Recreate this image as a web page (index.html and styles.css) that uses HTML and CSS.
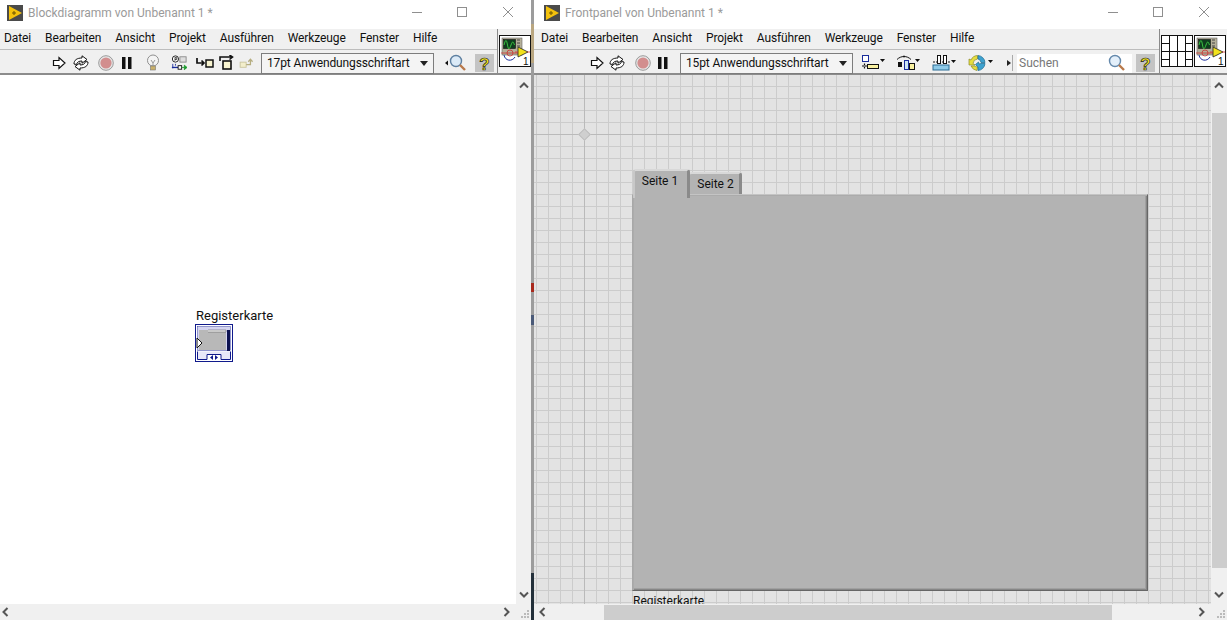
FILE: index.html
```
<!DOCTYPE html>
<html lang="de">
<head>
<meta charset="utf-8">
<title>LabVIEW</title>
<link rel="stylesheet" href="styles.css">
</head>
<body>
<svg class="defs" width="0" height="0">
  <defs>
    <symbol id="logo" viewBox="0 0 16 16"><rect width="16" height="16" fill="#4a4a4a"/><path d="M2 1 L15 8 L2 15 Z" fill="#f4c20d"/><path d="M5 8h4M7 6v4" stroke="#6b5200" stroke-width="1"/></symbol>
    <symbol id="min" viewBox="0 0 10 10"><path d="M0 5.500H10" stroke="#8f8f8f"/></symbol>
    <symbol id="max" viewBox="0 0 10 10"><rect x=".5" y=".5" width="9" height="9" fill="none" stroke="#8f8f8f"/></symbol>
    <symbol id="close" viewBox="0 0 10 10"><path d="M0 0L10 10M10 0L0 10" stroke="#8f8f8f"/></symbol>
    <symbol id="run" viewBox="0 0 14 14"><path d="M1.500 4.500H7V1.500L13 7L7 12.500V9.500H1.500Z" fill="#fff" stroke="#111" stroke-width="1.200"/></symbol>
    <symbol id="cont" viewBox="0 0 18 16"><path d="M2 9C2 5 5 3 10 3V.8L15 4.500L10 8.200V6C7 6 5 7 4.500 9.500Z" fill="#fff" stroke="#111"/><path d="M16 7C16 11 13 13 8 13V15.200L3 11.500L8 7.800V10C11 10 13 9 13.500 6.500Z" fill="#fff" stroke="#111"/></symbol>
    <symbol id="abort" viewBox="0 0 16 16"><circle cx="8" cy="8" r="7.300" fill="#e6e6e6" stroke="#9a9a9a"/><circle cx="8" cy="8" r="5.600" fill="#d28e8e"/></symbol>
    <symbol id="pause" viewBox="0 0 10 12"><path d="M0 0H3.500V12H0ZM6 0H9.500V12H6Z" fill="#111"/></symbol>
    <symbol id="bulb" viewBox="0 0 14 18"><circle cx="7" cy="6.500" r="5.500" fill="#f4f4f4" stroke="#8f8f8f"/><path d="M5 6l2 3 2-3M7 9v3" stroke="#999" fill="none"/><rect x="4.500" y="12" width="5" height="4" fill="#c9b06a" stroke="#777" stroke-width=".6"/></symbol>
    <symbol id="retain" viewBox="0 0 18 18"><circle cx="5" cy="4.500" r="3.500" fill="#fff" stroke="#111"/><path d="M4.500 2.500V6.500M4.500 3h2v2h-2" stroke="#111" fill="none" stroke-width=".8"/><rect x="10" y="2" width="7" height="6" fill="#ddd" stroke="#888"/><path d="M1 14H10" stroke="#1a2d9c" stroke-width="1.500"/><path d="M2 10v5M5 10v2" stroke="#1a2d9c"/><rect x="8" y="12" width="4" height="4" fill="#fff" stroke="#111"/><path d="M12 14h3M15 11.500l3 2.500-3 2.500z" fill="#1b9a2c" stroke="#1b9a2c"/></symbol>
    <symbol id="into" viewBox="0 0 18 12"><path d="M1 1V6H8M5.500 3.500L8 6L5.500 8.500" stroke="#111" stroke-width="1.700" fill="none"/><rect x="10" y="3" width="7" height="7" fill="#f8f4d0" stroke="#111" stroke-width="1.500"/></symbol>
    <symbol id="over" viewBox="0 0 16 16"><path d="M1 6V2H13M10.500 0L13.500 2L10.500 4.500" stroke="#111" stroke-width="1.600" fill="none"/><rect x="4" y="6" width="8" height="8" fill="#f8f4d0" stroke="#111" stroke-width="1.600"/></symbol>
    <symbol id="out" viewBox="0 0 18 14"><rect x="1" y="6" width="7" height="6" fill="#f3eecb" stroke="#c8c29a"/><path d="M8 9H13V4M10.500 5.500L13 2.500L15.500 5.500" stroke="#b5ad80" stroke-width="1.500" fill="none"/></symbol>
    <symbol id="lens" viewBox="0 0 22 18"><path d="M0 9L3 6.500V11.500Z" fill="#111"/><circle cx="11" cy="7" r="5.500" fill="#dbeaf7" stroke="#5d7fa0" stroke-width="1.400"/><path d="M15 11L20 16" stroke="#b9794a" stroke-width="2.400"/></symbol>
    <symbol id="lens2" viewBox="0 0 18 18"><circle cx="7" cy="7" r="5.500" fill="#e3effa" stroke="#6488ab" stroke-width="1.400"/><path d="M11 11L16 16" stroke="#b9794a" stroke-width="2.400"/></symbol>
    <symbol id="help" viewBox="0 0 19 18"><rect width="19" height="18" fill="#c4c4c4"/><text x="9.500" y="15.500" font-family="Liberation Sans" font-size="17" font-weight="700" text-anchor="middle" fill="#f5e61c" stroke="#222" stroke-width=".7">?</text></symbol>
    <symbol id="vi" viewBox="0 0 32 32"><rect x=".5" y=".5" width="31" height="31" fill="#fff" stroke="#111"/><rect x="3" y="3" width="20" height="17" fill="#b5b09a" stroke="#666" stroke-width=".6"/><rect x="4.500" y="4.500" width="12" height="9" fill="#0e3d1d" stroke="#111" stroke-width=".6"/><path d="M5 10c1.500-6 2.500-6 3.500 0s2 4 3.500 0 2-4 3.500 0" stroke="#45e04a" fill="none" stroke-width=".8"/><path d="M18 5h3M18 8h3M18 11h3" stroke="#444"/><path d="M2 18H22" stroke="#c33" stroke-width=".8"/><circle cx="11" cy="18" r="3" fill="none" stroke="#c33" stroke-width=".8"/><path d="M5 20c1 6 8 7 11 2" stroke="#1a2d9c" fill="none"/><path d="M19 12L29 17L19 22Z" fill="#f2e21c" stroke="#222" stroke-width=".8"/><path d="M16 17h3M28 17h3" stroke="#c33" stroke-width=".8"/><text x="24" y="30" font-family="Liberation Sans" font-size="10" fill="#111">1</text></symbol>
    <symbol id="conn" viewBox="0 0 32 32"><rect x=".5" y=".5" width="31" height="31" fill="#fff" stroke="#111"/><path d="M8.500 .5V31.500M16.500 .5V31.500M24.500 .5V31.500M.5 8.500H8.500M.5 16.500H32M.5 24.500H8.500M24.500 8.500H32M24.500 24.500H32" stroke="#111" fill="none"/></symbol>
    <symbol id="align" viewBox="0 0 24 16"><rect x="1.500" y=".5" width="6" height="6" fill="#fff" stroke="#1a2d9c"/><path d="M1 11H6M3.500 8.500V14" stroke="#111" stroke-width="1.200" stroke-dasharray="2 1"/><rect x="6.500" y="9.500" width="11" height="4" fill="#f8f0a0" stroke="#111"/><path d="M19 4h5l-2.500 3z" fill="#111"/></symbol>
    <symbol id="dist" viewBox="0 0 25 16"><path d="M1 4.500C5 .5 11 .5 15 4.500M8 .5v2" stroke="#111" fill="none"/><rect x="2" y="7" width="4" height="5" fill="#111"/><rect x="8.500" y="5.500" width="4" height="9" fill="#cde6f5" stroke="#1a2d9c"/><rect x="13.500" y="8.500" width="5" height="6" fill="#f8f0a0" stroke="#111"/><path d="M19 4h5l-2.500 3z" fill="#111"/></symbol>
    <symbol id="resize" viewBox="0 0 24 16"><path d="M1 7h17" stroke="#111" stroke-dasharray="2 1"/><rect x="5.500" y=".5" width="3" height="8" fill="#fff" stroke="#111"/><rect x="11.500" y=".5" width="3" height="8" fill="#fff" stroke="#111"/><rect x="1" y="10" width="16" height="5" fill="#8ecae8" stroke="#2b6d95"/><path d="M19 5h5l-2.500 3z" fill="#111"/></symbol>
    <symbol id="order" viewBox="0 0 26 18"><path d="M9.500 1.500A7.500 7.500 0 0 0 3 6L1 5V11H7L5 9.500A5 5 0 0 1 9.500 5Z" fill="#e6dd3e" stroke="#8b8a2a" stroke-width=".7"/><path d="M9 16.500A7.500 7.500 0 0 1 3 12L7 12A5 5 0 0 0 9.500 13Z" fill="#e6dd3e" stroke="#8b8a2a" stroke-width=".7"/><path d="M10 1.500A7.500 7.500 0 0 1 17 8.500L13 8.500A4 4 0 0 0 10 5Z" fill="#3da1cf" stroke="#1d6b90" stroke-width=".7"/><path d="M17 9.500A7.500 7.500 0 0 1 10 16.500L10 13L7.500 10.500 10.500 8 11 10L13 9.500Z" fill="#3da1cf" stroke="#1d6b90" stroke-width=".7"/><path d="M20 6h5l-2.500 3z" fill="#111"/></symbol>
    <symbol id="node" viewBox="0 0 38 38"><rect x=".5" y=".5" width="37" height="37" fill="#fff" stroke="#101a8c"/><rect x="2.500" y="2.500" width="33" height="24" fill="#d4d4f0" stroke="#101a8c" stroke-width=".4"/><path d="M4 6H13V8H31V26H4Z" fill="#b8b8b8"/><path d="M13 6H31V8H13" fill="#efefef" stroke="#555" stroke-width=".5"/><rect x="32" y="6" width="3" height="21" fill="#0d1250"/><path d="M2 14L7 19L2 24Z" fill="#fff" stroke="#111"/><path d="M2.500 27.500V35.500H12V30.500H26V35.500H35.500V27.500" fill="#e8e8f8" stroke="#101a8c"/><path d="M18 31l-3 2.500 3 2.500zM20 31l3 2.500-3 2.500z" fill="#101a8c"/></symbol>
    <symbol id="a-up" viewBox="0 0 10 8"><path d="M1 6.500L5 2.500L9 6.500" fill="none" stroke="#555" stroke-width="2"/></symbol>
    <symbol id="a-down" viewBox="0 0 10 8"><path d="M1 1.500L5 5.500L9 1.500" fill="none" stroke="#555" stroke-width="2"/></symbol>
    <symbol id="a-left" viewBox="0 0 8 10"><path d="M6.500 1L2.500 5L6.500 9" fill="none" stroke="#555" stroke-width="2"/></symbol>
    <symbol id="a-right" viewBox="0 0 8 10"><path d="M1.500 1L5.500 5L1.500 9" fill="none" stroke="#555" stroke-width="2"/></symbol>
    <symbol id="grip" viewBox="0 0 10 10"><path d="M7 1h2v2H7zM4 4h2v2H4zM7 4h2v2H7zM1 7h2v2H1zM4 7h2v2H4zM7 7h2v2H7z" fill="#bbb"/></symbol>
  </defs>
</svg>

<section class="window window-left">
  <header class="titlebar">
    <svg class="logo"><use href="#logo"/></svg>
    <span class="title">Blockdiagramm von Unbenannt 1 *</span>
    <svg class="wb wb-min"><use href="#min"/></svg>
    <svg class="wb"><use href="#max"/></svg>
    <svg class="wb wb-close"><use href="#close"/></svg>
  </header>
  <div class="chrome chrome-left">
    <div class="bars">
      <nav class="menu">
        <span>Datei</span><span>Bearbeiten</span><span>Ansicht</span><span>Projekt</span><span>Ausführen</span><span>Werkzeuge</span><span>Fenster</span><span>Hilfe</span>
      </nav>
      <div class="toolbar tl">
        <svg class="i14 a1"><use href="#run"/></svg>
        <svg class="i18 a2"><use href="#cont"/></svg>
        <svg class="i16 a3"><use href="#abort"/></svg>
        <svg class="i10 a4"><use href="#pause"/></svg>
        <svg class="i14h a5"><use href="#bulb"/></svg>
        <svg class="i18 a6"><use href="#retain"/></svg>
        <svg class="i18s a7"><use href="#into"/></svg>
        <svg class="i16 a8"><use href="#over"/></svg>
        <svg class="i18s a9"><use href="#out"/></svg>
        <div class="fontbox fa"><span>17pt Anwendungsschriftart</span><i class="caret"></i></div>
        <svg class="i22 a10"><use href="#lens"/></svg>
        <svg class="i19 a11"><use href="#help"/></svg>
      </div>
    </div>
    <div class="iconpane pane-left">
      <svg class="i32"><use href="#vi"/></svg>
    </div>
  </div>
  <div class="workspace">
    <main class="canvas canvas-white">
      <div class="node">
        <div class="node-label">Registerkarte</div>
        <svg class="node-icon"><use href="#node"/></svg>
      </div>
    </main>
    <aside class="vscroll">
      <svg class="ar-v"><use href="#a-up"/></svg>
      <svg class="ar-v"><use href="#a-down"/></svg>
    </aside>
  </div>
  <footer class="hscroll">
    <svg class="ar-h"><use href="#a-left"/></svg>
    <svg class="ar-h"><use href="#a-right"/></svg>
    <svg class="grip"><use href="#grip"/></svg>
  </footer>
</section>

<div class="divider">
  <b class="d-top"></b><b class="d-tan"></b><b class="d-grey1"></b><b class="d-red"></b><b class="d-grey2"></b><b class="d-blue"></b><b class="d-grey3"></b><b class="d-dark"></b>
</div>

<section class="window window-right">
  <header class="titlebar">
    <svg class="logo"><use href="#logo"/></svg>
    <span class="title">Frontpanel von Unbenannt 1 *</span>
    <svg class="wb wb-min"><use href="#min"/></svg>
    <svg class="wb"><use href="#max"/></svg>
    <svg class="wb wb-close"><use href="#close"/></svg>
  </header>
  <div class="chrome chrome-right">
    <div class="bars">
      <nav class="menu">
        <span>Datei</span><span>Bearbeiten</span><span>Ansicht</span><span>Projekt</span><span>Ausführen</span><span>Werkzeuge</span><span>Fenster</span><span>Hilfe</span>
      </nav>
      <div class="toolbar tr">
        <svg class="i14 b1"><use href="#run"/></svg>
        <svg class="i18 b2"><use href="#cont"/></svg>
        <svg class="i16 b3"><use href="#abort"/></svg>
        <svg class="i10 b4"><use href="#pause"/></svg>
        <div class="fontbox fb"><span>15pt Anwendungsschriftart</span><i class="caret"></i></div>
        <svg class="i24 b5"><use href="#align"/></svg>
        <svg class="i25 b6"><use href="#dist"/></svg>
        <svg class="i24 b7"><use href="#resize"/></svg>
        <svg class="i26 b8"><use href="#order"/></svg>
        <span class="tick"></span>
        <div class="search"><span>Suchen</span><svg class="i18q"><use href="#lens2"/></svg></div>
        <svg class="i19 b9"><use href="#help"/></svg>
      </div>
    </div>
    <div class="iconpane pane-right">
      <svg class="i32"><use href="#conn"/></svg>
      <svg class="i32"><use href="#vi"/></svg>
    </div>
  </div>
  <div class="workspace">
    <main class="canvas canvas-grid">
      <span class="origin-x"></span>
      <span class="origin-y"></span>
      <span class="origin-dot"></span>
      <div class="tabctl">
        <div class="tab tab-active">Seite 1</div>
        <div class="tab tab-idle">Seite 2</div>
        <div class="tabpage"></div>
      </div>
      <div class="ctl-label">Registerkarte</div>
    </main>
    <aside class="vscroll vscroll-r">
      <svg class="ar-v"><use href="#a-up"/></svg>
      <div class="vthumb"></div>
      <svg class="ar-v"><use href="#a-down"/></svg>
    </aside>
  </div>
  <footer class="hscroll hscroll-r">
    <svg class="ar-h"><use href="#a-left"/></svg>
    <div class="hthumb"></div>
    <svg class="ar-h ar-end"><use href="#a-right"/></svg>
    <svg class="grip"><use href="#grip"/></svg>
  </footer>
</section>
</body>
</html>
```
FILE: styles.css
```
* { box-sizing: border-box; }
html, body { margin: 0; height: 100%; }
body {
  display: flex;
  width: 1227px;
  height: 620px;
  overflow: hidden;
  background: #fff;
  color: #111;
  font: 12px Roboto, "Noto Sans", sans-serif;
}
.defs { position: absolute; }
svg { display: block; flex: none; }

.window { display: flex; flex-direction: column; height: 620px; background: #fff; }
.window-left { width: 531px; }
.window-right { width: 693px; }

.divider { width: 3px; display: flex; flex-direction: column; }
.divider b { display: block; background: #9c9c9c; }
.d-top { height: 24px; }
.divider .d-tan { height: 39px; background: #b9a680; }
.d-grey1 { height: 220px; }
.divider .d-red { height: 9px; background: #a8281c; }
.d-grey2 { height: 23px; }
.divider .d-blue { height: 10px; background: #4a5a78; }
.d-grey3 { height: 248px; }
.divider .d-dark { height: 47px; background: #23303a; }

.titlebar { height: 29px; padding-bottom: 3px; display: flex; align-items: center; flex: none; }
.window-left .titlebar { padding-left: 7px; padding-right: 18px; }
.window-right .titlebar { padding-left: 10px; padding-right: 18px; }
.logo { width: 16px; height: 16px; }
.title { margin-left: 5px; color: #9a9a9a; flex: 1; }
.wb { width: 10px; height: 10px; margin-left: 35px; margin-top: -2px; }
.wb-close { margin-left: 36px; }

.chrome { display: flex; height: 46px; background: #f0f0f0; flex: none; border-bottom: 2px solid #8c8c8c; }
.bars { flex: 1; min-width: 0; }
.menu {
  height: 21px;
  padding: 0 0 2px 4px;
  display: flex;
  align-items: center;
  gap: 14px;
  background: #f0f0f0;
  border-bottom: 1px solid #bdbdbd;
  letter-spacing: -0.11px;
}
.window-right .menu { padding-left: 7px; }
.toolbar { height: 23px; display: flex; align-items: center; }
.toolbar > svg { margin-top: 2px; }

.iconpane { display: flex; padding: 6px 0 0 1px; border-left: 1px solid #8a8a8a; }
.pane-left { width: 34px; }
.pane-right { width: 68px; gap: 1px; }
.i32 { width: 32px; height: 32px; }

.i10 { width: 10px; height: 12px; }
.i14 { width: 14px; height: 14px; }
.i14h { width: 14px; height: 18px; }
.i16 { width: 16px; height: 16px; }
.i18 { width: 18px; height: 16px; }
.i18s { width: 18px; height: 12px; }
.i19 { width: 19px; height: 18px; }
.i22 { width: 22px; height: 18px; }
.i24 { width: 24px; height: 16px; }
.i25 { width: 25px; height: 16px; }
.i26 { width: 26px; height: 18px; }
.i18q { width: 18px; height: 18px; }

.a1 { margin-left: 52px; }
.a2 { margin-left: 6px; }
.a3 { margin-left: 8px; }
.a4 { margin-left: 8px; }
.a5 { margin-left: 14px; }
.a6 { margin-left: 10px; }
.a7 { margin-left: 8px; }
.a8 { margin-left: 5px; }
.a9 { margin-left: 3px; }
.fa { margin-left: 5px; }
.a10 { margin-left: 11px; }
.a11 { margin-left: 8px; }

.b1 { margin-left: 56px; }
.b2 { margin-left: 4px; }
.b3 { margin-left: 9px; }
.b4 { margin-left: 7px; }
.fb { margin-left: 12px; }
.b5 { margin-left: 8px; }
.b6 { margin-left: 11px; }
.b7 { margin-left: 11px; }
.b8 { margin-left: 12px; }
.b9 { margin-left: 4px; }

.fontbox {
  width: 173px;
  height: 21px;
  margin-top: 3px;
  padding: 0 5px 0 5px;
  display: flex;
  align-items: center;
  justify-content: space-between;
  border: 1px solid #7d7d7d;
  background: #f4f4f4;
  white-space: nowrap;
  letter-spacing: -0.12px;
}
.caret { width: 0; height: 0; border: 4px solid transparent; border-top: 5px solid #222; border-bottom: 0; }

.tick { width: 6px; height: 16px; margin: 2px 0 0 13px; border-right: 1px solid #aaa; position: relative; }
.tick::before { content: ""; position: absolute; left: 0; top: 5px; border: 3px solid transparent; border-left: 4px solid #222; border-right: 0; }
.search {
  width: 115px;
  height: 19px;
  margin: 3px 0 0 4px;
  padding: 0 6px 0 2px;
  display: flex;
  align-items: center;
  justify-content: space-between;
  background: #fff;
  color: #777;
}

.workspace { flex: 1; min-height: 0; display: flex; }
.canvas { flex: 1; position: relative; overflow: hidden; }
.canvas-white { background: #fff; }
.canvas-grid {
  background-color: #e3e3e3;
  background-image:
    linear-gradient(#cccccc 1px, transparent 1px),
    linear-gradient(90deg, #cccccc 1px, transparent 1px);
  background-size: 12px 12px;
  background-position: 2px 11px;
}
.vscroll {
  width: 15px;
  background: #f0f0f0;
  display: flex;
  flex-direction: column;
  justify-content: space-between;
  align-items: center;
  padding: 6px 0 5px;
}
.vscroll-r { width: 16px; }
.vthumb { width: 15px; height: 455px; background: #cdcdcd; margin-left: 1px; }
.ar-v { width: 10px; height: 8px; }
.ar-h { width: 8px; height: 10px; }

.hscroll {
  height: 16px;
  background: #f0f0f0;
  flex: none;
  display: flex;
  align-items: center;
  position: relative;
  padding: 0 20px 0 1px;
  justify-content: space-between;
}
.hscroll-r { padding: 0 21px 0 4px; justify-content: flex-start; }
.hthumb { height: 15px; width: 508px; margin: 1px 0 0 58px; background: #cdcdcd; }
.ar-end { margin-left: 86px; }
.grip { position: absolute; right: 1px; bottom: 1px; width: 10px; height: 10px; }

.node { position: absolute; left: 195px; top: 232px; }
.node-label { font-size: 13px; line-height: 17px; margin-left: 1px; white-space: nowrap; }
.node-icon { width: 38px; height: 38px; }

.origin-x { position: absolute; left: 0; right: 0; top: 59px; height: 1px; background: #bababa; }
.origin-y { position: absolute; top: 0; bottom: 0; left: 50px; width: 1px; background: #bababa; }
.origin-dot { position: absolute; left: 46px; top: 55px; width: 9px; height: 9px; background: #cfcfcf; border: 1px solid #bdbdbd; transform: rotate(45deg); }

.tabctl { position: absolute; left: 98px; top: 94px; width: 516px; height: 422px; }
.tab { position: absolute; color: #111; background: #b3b3b3; display: flex; justify-content: center; }
.tab-active {
  left: 1px; top: 0; width: 57px; height: 29px; z-index: 2; padding: 3px 2px 0 0;
  border-top: 2px solid #d8d8d8; border-left: 2px solid #c8c8c8; border-right: 3px solid #8a8a8a;
  border-radius: 3px 3px 0 0;
}
.tab-idle {
  left: 57px; top: 3px; width: 53px; height: 23px; padding: 3px 0 0 2px;
  border-top: 2px solid #d8d8d8; border-left: 1px solid #c8c8c8; border-right: 3px solid #8a8a8a;
  border-radius: 3px 3px 0 0;
}
.tabpage {
  position: absolute; left: 0; top: 25px; width: 516px; height: 397px;
  background: #b3b3b3;
  border: 1px solid;
  border-color: #c4c4c4 #666 #666 #a8a8a8;
  box-shadow: inset 1px 1px 0 #ababab, inset -1px -1px 0 #868686, inset -2px -2px 0 #a0a0a0;
}
.ctl-label { position: absolute; left: 99px; top: 518px; white-space: nowrap; line-height: 17px; }
```
